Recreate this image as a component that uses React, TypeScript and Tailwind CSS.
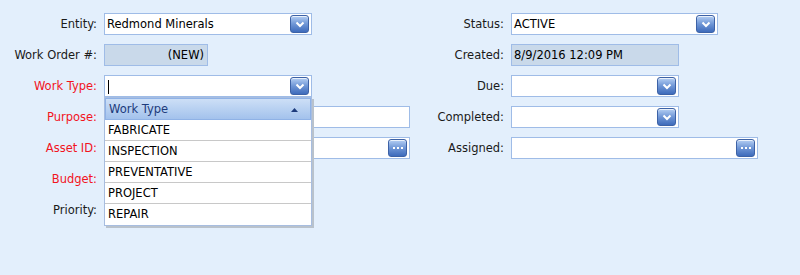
import { ReactNode } from "react";

const font = { fontFamily: '"DejaVu Sans", Tahoma, sans-serif' };

const DropButton = () => (
  <div className="flex h-[18px] w-[19px] items-center justify-center rounded-[3px] border border-[#3d62a6] bg-gradient-to-b from-[#b5cff3] via-[#6f96d6] to-[#3e6bbb] shadow-[inset_0_1px_0_rgba(255,255,255,0.7)]">
    <svg width="10" height="7" viewBox="0 0 10 7">
      <path d="M1.5 1.5 L5 5 L8.5 1.5" fill="none" stroke="#fff" strokeWidth="2" />
    </svg>
  </div>
);

const DotsButton = () => (
  <div className="flex h-[18px] w-[19px] items-center justify-center gap-[2px] rounded-[3px] border border-[#3d62a6] bg-gradient-to-b from-[#b5cff3] via-[#6f96d6] to-[#3e6bbb] shadow-[inset_0_1px_0_rgba(255,255,255,0.7)]">
    <span className="h-[2px] w-[2px] bg-white" />
    <span className="h-[2px] w-[2px] bg-white" />
    <span className="h-[2px] w-[2px] bg-white" />
  </div>
);

const Row = ({
  label,
  red,
  labelW,
  children,
}: {
  label: string;
  red?: boolean;
  labelW: string;
  children?: ReactNode;
}) => (
  <div className="flex h-[31px] items-start">
    <div
      className={`${labelW} flex h-[22px] shrink-0 items-center justify-end pr-[7px] pt-[2px] text-[11.5px] ${
        red ? "text-[#f2141e]" : "text-[#1a1a1a]"
      }`}
    >
      {label}
    </div>
    {children}
  </div>
);

const Box = ({
  w,
  value,
  button,
  readonly,
  right,
  cursor,
}: {
  w: string;
  value?: string;
  button?: "drop" | "dots";
  readonly?: boolean;
  right?: boolean;
  cursor?: boolean;
}) => (
  <div
    className={`${w} flex h-[22px] items-center border border-[#9fbce7] pl-[2px] pr-[2px] text-[11.5px] text-black ${
      readonly ? "bg-[#c9d9ea]" : "bg-white"
    }`}
  >
    <div className={`flex flex-1 pt-[1px] ${right ? "justify-end pr-[1px]" : ""}`}>
      {cursor && <span className="ml-[1px] h-[14px] w-px bg-black" />}
      {value}
    </div>
    {button === "drop" && <DropButton />}
    {button === "dots" && <DotsButton />}
  </div>
);

const items = ["FABRICATE", "INSPECTION", "PREVENTATIVE", "PROJECT", "REPAIR"];

export default function App() {
  return (
    <div className="h-[275px] w-[800px] bg-[#e3effc]" style={font}>
      <div className="flex pt-[13px]">
        <div className="w-[420px] shrink-0">
          <Row label="Entity:" labelW="w-[104px]">
            <Box w="w-[208px]" value="Redmond Minerals" button="drop" />
          </Row>
          <Row label="Work Order #:" labelW="w-[104px]">
            <Box w="w-[104px]" value="(NEW)" readonly right />
          </Row>
          <Row label="Work Type:" labelW="w-[104px]" red>
            <div className="relative">
              <Box w="w-[208px]" button="drop" cursor />
              <div className="absolute left-0 top-[22px] z-10 w-[208px] border border-[#a7bde0] bg-white shadow-[2px_2px_0_#b9c2cc]">
                <div className="flex h-[22px] items-center justify-between border border-[#8fb2e6] bg-gradient-to-b from-[#cddff6] to-[#a3c2ec] pl-[3px] pr-[12px] pt-[1px] text-[11.5px] text-[#1d3b7c]">
                  <span>Work Type</span>
                  <svg width="7" height="4" viewBox="0 0 7 4">
                    <path d="M0 4 L3.5 0 L7 4 Z" fill="#1d3b7c" />
                  </svg>
                </div>
                {items.map((it, i) => (
                  <div
                    key={it}
                    className={`flex h-[21px] items-center pl-[3px] pt-[1px] text-[11.5px] text-black ${
                      i < items.length - 1 ? "border-b border-[#c8c8c8]" : ""
                    }`}
                  >
                    {it}
                  </div>
                ))}
              </div>
            </div>
          </Row>
          <Row label="Purpose:" labelW="w-[104px]" red>
            <Box w="w-[306px]" />
          </Row>
          <Row label="Asset ID:" labelW="w-[104px]" red>
            <Box w="w-[306px]" button="dots" />
          </Row>
          <Row label="Budget:" labelW="w-[104px]" red />
          <Row label="Priority:" labelW="w-[104px]" />
        </div>
        <div className="flex-1">
          <Row label="Status:" labelW="w-[91px]">
            <Box w="w-[207px]" value="ACTIVE" button="drop" />
          </Row>
          <Row label="Created:" labelW="w-[91px]">
            <Box w="w-[168px]" value="8/9/2016 12:09 PM" readonly />
          </Row>
          <Row label="Due:" labelW="w-[91px]">
            <Box w="w-[168px]" button="drop" />
          </Row>
          <Row label="Completed:" labelW="w-[91px]">
            <Box w="w-[168px]" button="drop" />
          </Row>
          <Row label="Assigned:" labelW="w-[91px]">
            <Box w="w-[247px]" button="dots" />
          </Row>
        </div>
      </div>
    </div>
  );
}
